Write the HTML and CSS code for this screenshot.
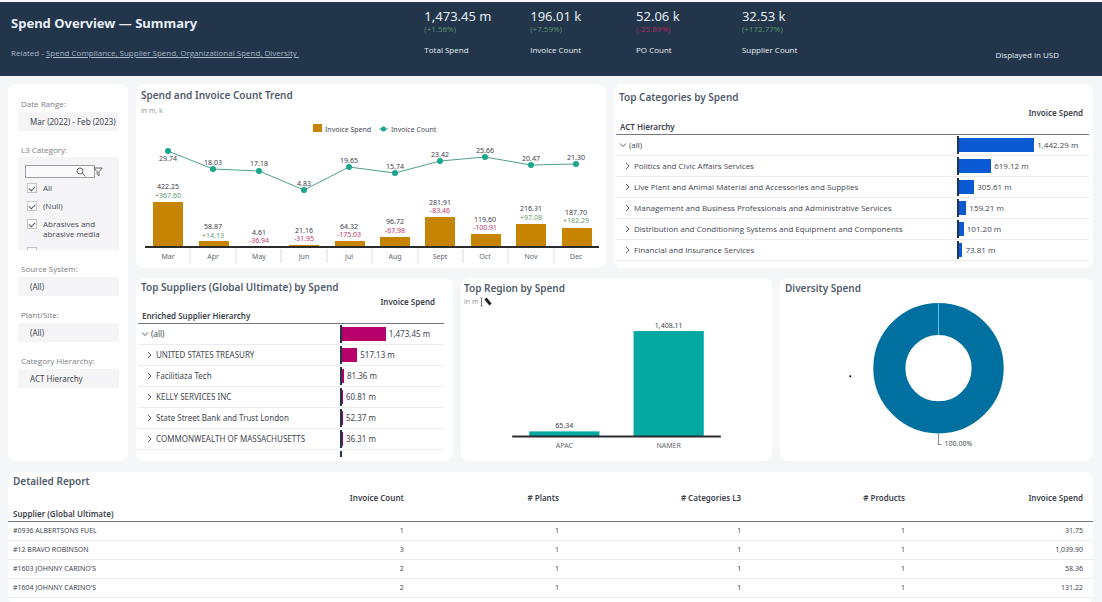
FILE: index.html
```html
<!DOCTYPE html>
<html lang="en">
<head>
<meta charset="utf-8">
<title>Spend Overview — Summary</title>
<link rel="stylesheet" href="styles.css">
</head>
<body>
<header class="banner">
  <div class="banner-title">
    <h1>Spend Overview — Summary</h1>
    <p class="related">Related - <span class="links"><a href="#compliance">Spend Compliance</a>, <a href="#supplier">Supplier Spend</a>, <a href="#organizational">Organizational Spend</a>, <a href="#diversity">Diversity</a>&nbsp;</span></p>
  </div>
  <div class="kpi"><strong>1,473.45 m</strong><span class="delta up">(+1.56%)</span><span class="kpi-name">Total Spend</span></div>
  <div class="kpi"><strong>196.01 k</strong><span class="delta up">(+7.59%)</span><span class="kpi-name">Invoice Count</span></div>
  <div class="kpi"><strong>52.06 k</strong><span class="delta down">(-25.89%)</span><span class="kpi-name">PO Count</span></div>
  <div class="kpi"><strong>32.53 k</strong><span class="delta up">(+172.77%)</span><span class="kpi-name">Supplier Count</span></div>
  <p class="currency">Displayed in USD</p>
</header>

<main class="page">
  <div class="board">
    <aside class="card filters">
      <div class="filter">
        <label for="range">Date Range:</label>
        <button id="range" class="field" type="button">Mar (2022) - Feb (2023)</button>
      </div>
      <fieldset class="filter">
        <legend>L3 Category:</legend>
        <div class="picker">
          <div class="search">
            <input type="text" aria-label="Search categories">
            <svg class="lens" viewBox="0 0 10 10"><circle cx="4" cy="4" r="3"/><path d="M6.2 6.2 9.3 9.3"/></svg>
            <svg class="funnel" viewBox="0 0 10 10"><path d="M1 1h8.2L6 4.8v4L4.2 7.4V4.800Z"/></svg>
          </div>
          <label class="option"><input type="checkbox" checked><span>All</span></label>
          <label class="option"><input type="checkbox" checked><span>(Null)</span></label>
          <label class="option"><input type="checkbox" checked><span>Abrasives and abrasive media</span></label>
          <label class="option"><input type="checkbox" aria-label="Next category"></label>
        </div>
      </fieldset>
      <div class="filter">
        <label for="source">Source System:</label>
        <select id="source" class="field"><option>(All)</option></select>
      </div>
      <div class="filter">
        <label for="plant">Plant/Site:</label>
        <select id="plant" class="field"><option>(All)</option></select>
      </div>
      <div class="filter">
        <label for="hierarchy">Category Hierarchy:</label>
        <select id="hierarchy" class="field"><option>ACT Hierarchy</option></select>
      </div>
    </aside>

    <div class="rows">
      <div class="row top">
        <section class="card trend">
          <h2>Spend and Invoice Count Trend</h2>
          <p class="unit">in m, k</p>
          <svg class="chart" viewBox="0 0 470 150">
            <g class="legend">
              <rect class="gold" x="177" y="6" width="9" height="8"/><text x="189" y="14">Invoice Spend</text>
              <path class="line" d="M243 11h9"/><circle class="dot" cx="247.500" cy="11" r="2.500"/><text x="255" y="14">Invoice Count</text>
            </g>
            <g class="gold">
              <rect x="17" y="84" width="30" height="45"/><rect x="63" y="123" width="30" height="6"/><rect x="108" y="128" width="30" height="1"/><rect x="153" y="127" width="30" height="2"/><rect x="199" y="123" width="30" height="6"/><rect x="244" y="119" width="30" height="10"/><rect x="289" y="99" width="30" height="30"/><rect x="335" y="116" width="30" height="13"/><rect x="380" y="106" width="30" height="23"/><rect x="426" y="110" width="30" height="19"/>
            </g>
            <path class="axis" d="M9 129h454"/>
            <path class="ticks" d="M54 131v14M100 131v14M145 131v14M191 131v14M236 131v14M282 131v14M327 131v14M372 131v14M418 131v14"/>
            <polyline class="line" points="32,33 77,51 123,53 168,72 213,49 259,55 304,43 349,39 395,47 440,46"/>
            <g class="dot"><circle cx="32" cy="33" r="3"/><circle cx="77" cy="51" r="3"/><circle cx="123" cy="53" r="3"/><circle cx="168" cy="72" r="3"/><circle cx="213" cy="49" r="3"/><circle cx="259" cy="55" r="3"/><circle cx="304" cy="43" r="3"/><circle cx="349" cy="39" r="3"/><circle cx="395" cy="47" r="3"/><circle cx="440" cy="46" r="3"/></g>
            <g class="value"><text x="32" y="43">29.74</text><text x="77" y="47">18.03</text><text x="123" y="48">17.18</text><text x="168" y="68">4.83</text><text x="213" y="45">19.65</text><text x="259" y="51">15.74</text><text x="304" y="39">23.42</text><text x="349" y="35">25.66</text><text x="395" y="43">20.47</text><text x="440" y="42">21.30</text></g>
            <g class="value"><text x="32" y="71">422.25</text><text x="77" y="111">58.87</text><text x="123" y="117">4.61</text><text x="168" y="115">21.16</text><text x="213" y="111">64.32</text><text x="259" y="106">96.72</text><text x="304" y="87">281.91</text><text x="349" y="104">119.60</text><text x="395" y="93">216.31</text><text x="440" y="97">187.70</text></g>
            <g class="value"><text class="up" x="32" y="80">+367.60</text><text class="up" x="77" y="120">+14.13</text><text class="down" x="123" y="125">-36.94</text><text class="down" x="168" y="123">-31.95</text><text class="down" x="213" y="119">-175.03</text><text class="down" x="259" y="115">-67.98</text><text class="down" x="304" y="95">-83.46</text><text class="down" x="349" y="112">-100.91</text><text class="up" x="395" y="102">+97.08</text><text class="up" x="440" y="105">+182.29</text></g>
            <g class="value cat"><text x="32" y="141">Mar</text><text x="77" y="141">Apr</text><text x="123" y="141">May</text><text x="168" y="141">Jun</text><text x="213" y="141">Jul</text><text x="259" y="141">Aug</text><text x="304" y="141">Sept</text><text x="349" y="141">Oct</text><text x="395" y="141">Nov</text><text x="440" y="141">Dec</text></g>
          </svg>
        </section>

        <section class="card categories">
          <h2>Top Categories by Spend</h2>
          <table class="tree blue">
            <thead><tr><th class="name">ACT Hierarchy</th><th class="measure">Invoice Spend</th></tr></thead>
            <tbody>
              <tr><td class="root"><svg viewBox="0 0 8 8"><path d="M1 2.500 4 5.500 7 2.500"/></svg>(all)</td><td><div class="bar"><i style="width:58%"></i>1,442.29 m</div></td></tr>
              <tr><td><svg viewBox="0 0 8 8"><path d="M2 1 5 4 2 7"/></svg>Politics and Civic Affairs Services</td><td><div class="bar"><i style="width:25%"></i>619.12 m</div></td></tr>
              <tr><td><svg viewBox="0 0 8 8"><path d="M2 1 5 4 2 7"/></svg>Live Plant and Animal Material and Accessories and Supplies</td><td><div class="bar"><i style="width:12%"></i>305.61 m</div></td></tr>
              <tr><td><svg viewBox="0 0 8 8"><path d="M2 1 5 4 2 7"/></svg>Management and Business Professionals and Administrative Services</td><td><div class="bar"><i style="width:6%"></i>159.21 m</div></td></tr>
              <tr><td><svg viewBox="0 0 8 8"><path d="M2 1 5 4 2 7"/></svg>Distribution and Conditioning Systems and Equipment and Components</td><td><div class="bar"><i style="width:4%"></i>101.20 m</div></td></tr>
              <tr><td><svg viewBox="0 0 8 8"><path d="M2 1 5 4 2 7"/></svg>Financial and Insurance Services</td><td><div class="bar"><i style="width:3%"></i>73.81 m</div></td></tr>
            </tbody>
          </table>
        </section>
      </div>

      <div class="row bottom">
        <section class="card suppliers">
          <h2>Top Suppliers (Global Ultimate) by Spend</h2>
          <div class="clip">
          <table class="tree magenta">
            <thead><tr><th class="name">Enriched Supplier Hierarchy</th><th class="measure">Invoice Spend</th></tr></thead>
            <tbody>
              <tr><td class="root"><svg viewBox="0 0 8 8"><path d="M1 2.500 4 5.500 7 2.500"/></svg>(all)</td><td><div class="bar"><i style="width:43%"></i>1,473.45 m</div></td></tr>
              <tr><td><svg viewBox="0 0 8 8"><path d="M2 1 5 4 2 7"/></svg>UNITED STATES TREASURY</td><td><div class="bar"><i style="width:15%"></i>517.13 m</div></td></tr>
              <tr><td><svg viewBox="0 0 8 8"><path d="M2 1 5 4 2 7"/></svg>Facilitiaza Tech</td><td><div class="bar"><i style="width:2%"></i>81.36 m</div></td></tr>
              <tr><td><svg viewBox="0 0 8 8"><path d="M2 1 5 4 2 7"/></svg>KELLY SERVICES INC</td><td><div class="bar"><i style="width:1%"></i>60.81 m</div></td></tr>
              <tr><td><svg viewBox="0 0 8 8"><path d="M2 1 5 4 2 7"/></svg>State Street Bank and Trust London</td><td><div class="bar"><i style="width:1%"></i>52.37 m</div></td></tr>
              <tr><td><svg viewBox="0 0 8 8"><path d="M2 1 5 4 2 7"/></svg>COMMONWEALTH OF MASSACHUSETTS</td><td><div class="bar"><i style="width:1%"></i>36.31 m</div></td></tr>
              <tr><td><svg viewBox="0 0 8 8"><path d="M2 1 5 4 2 7"/></svg></td><td><div class="bar"></div></td></tr>
            </tbody>
          </table>
          </div>
        </section>

        <section class="card region">
          <h2>Top Region by Spend</h2>
          <p class="unit">in m <svg class="pencil" viewBox="0 0 13 10"><path class="caret" d="M1.500 1v8M.5 1h2M.5 9h2"/><path class="pen" d="M5.500 1.500 10.500 7.500"/></svg></p>
          <svg class="chart" viewBox="0 0 310 150">
            <g class="teal"><rect x="68" y="122" width="70" height="5"/><rect x="172" y="22" width="70" height="105"/></g>
            <path class="axis" d="M51 127h208"/>
            <g class="value"><text x="103" y="119">65.34</text><text x="207" y="19">1,408.11</text></g>
            <g class="value cat"><text x="103" y="139">APAC</text><text x="207" y="139">NAMER</text></g>
          </svg>
        </section>

        <section class="card diversity">
          <h2>Diversity Spend</h2>
          <svg class="chart" viewBox="0 0 312 162">
            <circle class="ring" cx="158" cy="70" r="49"/>
            <path class="seam" d="M158 5v32"/>
            <path class="leader" d="M158 135v11h3"/>
            <circle cx="70" cy="78" r="1"/>
            <text class="share" x="164" y="148">100.00%</text>
          </svg>
        </section>
      </div>
    </div>
  </div>

  <section class="card report">
    <h2>Detailed Report</h2>
    <table>
      <colgroup><col class="c1"><col class="c2"><col class="c3"><col class="c4"><col class="c5"><col class="c6"></colgroup>
      <thead><tr><th>Supplier (Global Ultimate)</th><th>Invoice Count</th><th># Plants</th><th># Categories L3</th><th># Products</th><th>Invoice Spend</th></tr></thead>
      <tbody>
        <tr><td>#0936 ALBERTSONS FUEL</td><td>1</td><td>1</td><td>1</td><td>1</td><td>31.75</td></tr>
        <tr><td>#12 BRAVO ROBINSON</td><td>3</td><td>1</td><td>1</td><td>1</td><td>1,039.90</td></tr>
        <tr><td>#1603 JOHNNY CARINO'S</td><td>2</td><td>1</td><td>1</td><td>1</td><td>58.36</td></tr>
        <tr><td>#1604 JOHNNY CARINO'S</td><td>2</td><td>1</td><td>1</td><td>1</td><td>131.22</td></tr>
      </tbody>
    </table>
  </section>
</main>
</body>
</html>
```
FILE: styles.css
```css
* { box-sizing: border-box; }
body { margin: 0; padding-top: 2px; background: #f5f6f7; color: #42474f; font: 8px/10px "Open Sans", "Noto Sans", sans-serif; }
h1, h2, p { margin: 0; }
h1, h2, th, .field, .chart, .kpi strong, .suppliers td, .report td { font-family: "Noto Sans", "Open Sans", sans-serif; }
button, input, select { font: inherit; color: inherit; }

.banner { display: grid; grid-template-columns: 414fr 106fr 106fr 106fr 254fr 61fr; height: 74px; padding: 0 43px 0 11px; background: #22354b; color: #e6edf4; }
.banner h1 { margin-top: 11px; font-size: 13px; line-height: 20px; font-weight: 700; }
.related { margin-top: 15px; color: #a9b7c6; white-space: nowrap; }
.links { text-decoration: underline; }
.links a { color: inherit; }
.kpi { display: flex; flex-direction: column; padding-top: 6px; }
.kpi strong { font-size: 13px; line-height: 16px; font-weight: 400; }
.kpi .delta { margin-bottom: 11px; }
.kpi .up { color: #5f9468; }
.kpi .down { color: #b02a5b; }
.currency { margin-top: 48px; white-space: nowrap; }

.page { display: flex; flex-direction: column; gap: 11px; padding: 8px 9px 0 8px; }
.board { display: grid; grid-template-columns: 120px 1fr; gap: 8px; }
.card { background: #fff; border-radius: 8px; min-width: 0; overflow: hidden; }
.card h2 { padding-left: 5px; font-size: 10px; line-height: 14px; font-weight: 600; color: #515c6b; }
.rows { display: flex; flex-direction: column; gap: 10px; min-width: 0; }
.row { display: grid; gap: 8px; }
.top { grid-template-columns: 470fr 479fr; }
.bottom { grid-template-columns: 317fr 311fr 313fr; }

.filters { display: flex; flex-direction: column; gap: 14px; padding: 15px 9px 20px 10px; }
.filter { display: flex; flex-direction: column; gap: 3px; margin: 0; padding: 0; border: 0; min-width: 0; }
.filter > label, .filter > legend { padding: 0 0 0 3px; color: #777c83; }
.field { width: 100%; height: 19px; padding: 0 0 0 12px; border: 0; background: #f5f5f8; text-align: left; appearance: none; white-space: nowrap; }
.picker { height: 93px; margin-top: 2px; padding: 8px 8px 0 7px; background: #f5f5f8; overflow: hidden; }
.search { display: flex; align-items: center; margin-bottom: 5px; }
.search input { width: 70px; height: 13px; padding: 0 16px 0 3px; border: 1px solid #9a9da2; background: #fafafb; }
.search svg { width: 10px; height: 10px; fill: none; stroke: #666b72; }
.lens { margin-left: -19px; }
.funnel { margin-left: 7px; }
.option { display: flex; gap: 6px; padding-left: 2px; margin-bottom: 8px; }
.option input { flex: none; display: grid; place-items: center; width: 10px; height: 10px; margin: 0; border: 1px solid #c3c6cb; background: #fff; appearance: none; }
.option input:checked::after { content: ""; width: 5px; height: 3px; border: solid #555b63; border-width: 0 0 1px 1px; transform: rotate(-45deg); }

.chart { display: block; width: 100%; height: auto; }
.chart text { font-size: 7px; fill: #4a4f57; }
.chart .value text { text-anchor: middle; fill: #3b4047; }
.chart .cat text { fill: #62676e; }
.chart .value .up { fill: #5f9d68; }
.chart .value .down { fill: #c0396b; }
.gold { fill: #c78400; }
.teal { fill: #03a8a1; }
.line { fill: none; stroke: #4f9f8c; stroke-width: 1; }
.dot { fill: #1ba58a; }
.axis { stroke: #2b2b2e; stroke-width: 2; }
.ticks { stroke: #dcdee1; }
.ring { fill: none; stroke: #0070a0; stroke-width: 32; }
.seam { stroke: #62bfe3; }
.leader { fill: none; stroke: #888; }
.trend h2 { margin-top: 4px; }
.unit { padding-left: 5px; font-size: 7px; color: #8a8f96; }
.trend .unit { margin-top: 4px; margin-bottom: 2px; }
.region .unit { display: flex; align-items: center; gap: 2px; padding-left: 3px; line-height: 14px; }
.pencil { width: 13px; height: 10px; fill: none; }
.caret { stroke: #777; }
.pen { stroke: #222; stroke-width: 3; }
.region h2, .diversity h2 { margin-top: 3px; padding-left: 3px; }
.diversity h2 { padding-left: 5px; margin-bottom: 3px; }

table { border-collapse: collapse; table-layout: fixed; width: 100%; }
th { padding: 0; font-weight: 600; color: #3d434b; text-align: left; }
td { padding: 0; }
.tree th { border-bottom: 1px solid #75797f; }
.tree .name { width: 72%; padding-left: 4px; vertical-align: bottom; padding-bottom: 2px; }
.tree .measure { padding-right: 6px; vertical-align: top; text-align: right; }
.tree td { height: 21px; padding: 0 0 0 8px; border-bottom: 1px solid #ececef; white-space: nowrap; }
.tree td.root { padding-left: 3px; }
.tree td + td { padding-left: 0; }
.tree td svg { width: 8px; height: 8px; margin-right: 2px; fill: none; stroke: #555b63; vertical-align: -1px; }
.bar { display: flex; align-items: center; gap: 3px; height: 18px; border-left: 2px solid #23344d; }
.bar i { height: 14px; flex: none; }
.blue i { background: #0a5bd3; }
.magenta i { background: #b8006b; }
.categories { padding: 0 4px 0 2px; }
.categories h2 { margin-top: 6px; padding-left: 3px; }
.categories thead tr { height: 26px; }
.categories table { margin-top: 4px; }
.suppliers { padding: 0 9px 0 2px; }
.suppliers h2 { margin-top: 2px; padding-left: 3px; }
.suppliers thead tr { height: 26px; }
.clip { height: 160px; margin-top: 3px; overflow: hidden; }
.suppliers .name { width: 66%; }
.suppliers .measure { padding-right: 9px; }

.report { padding-top: 2px; padding-bottom: 6px; }
.report table { margin: 5px 0 0; }
.report th { height: 29px; border-bottom: 1px solid #75797f; vertical-align: top; text-align: right; padding: 0 10px 0 0; }
.report th:first-child { vertical-align: bottom; padding-bottom: 2px; }
.report td { height: 19px; border-bottom: 1px solid #ececef; text-align: right; padding: 0 10px 0 0; font-size: 7px; }
.report th:first-child, .report td:first-child { text-align: left; padding-left: 5px; }
.c1 { width: 23.4%; }
.c2 { width: 14%; }
.c3 { width: 14.3%; }
.c4 { width: 16.8%; }
.c5 { width: 15.1%; }
.c6 { width: 16.4%; }
```
